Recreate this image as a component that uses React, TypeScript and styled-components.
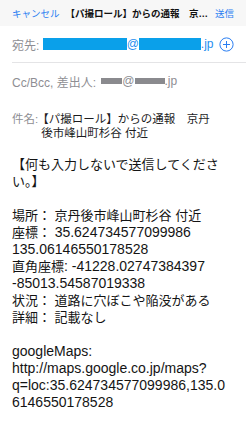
import React from 'react';
import styled, { createGlobalStyle } from 'styled-components';

const GlobalStyle = createGlobalStyle`
  html, body {
    margin: 0;
    padding: 0;
    background: #ffffff;
  }
  body {
    font-family: "Liberation Sans", "Noto Sans CJK JP", sans-serif;
    -webkit-font-smoothing: antialiased;
  }
`;

const Screen = styled.div`
  width: 246px;
  height: 425px;
  overflow: hidden;
  display: flex;
  flex-direction: column;
`;

const Header = styled.div`
  height: 26px;
  flex-shrink: 0;
  display: flex;
  align-items: center;
  gap: 6px;
  padding: 0 12px;
  background: #f7f7f7;
  font-size: 9.5px;
`;

const HeaderButton = styled.span`
  color: #2a7ef2;
  white-space: nowrap;
`;

const HeaderTitle = styled.span`
  flex: 1;
  min-width: 0;
  text-align: center;
  font-weight: 600;
  color: #111111;
  white-space: nowrap;
  overflow: hidden;
  text-overflow: ellipsis;
`;

const FieldRow = styled.div<{ $divider?: boolean }>`
  height: 36px;
  margin-left: 12px;
  padding-right: 12px;
  display: flex;
  align-items: center;
  font-size: 12px;
  white-space: nowrap;
  border-bottom: ${p => (p.$divider ? '1px solid #e4e4e6' : 'none')};
`;

const Label = styled.span`
  color: #8e8e93;
`;

const Address = styled.span<{ $color: string }>`
  display: inline-flex;
  align-items: center;
  color: ${p => p.$color};
`;

const Redact = styled.span<{ $w: number; $h: number; $color: string; $gap?: number }>`
  display: inline-block;
  width: ${p => p.$w}px;
  height: ${p => p.$h}px;
  margin-left: ${p => p.$gap || 0}px;
  background: ${p => p.$color};
`;

const AddButton = styled.span`
  margin-left: auto;
  display: flex;
  align-items: center;
`;

const SubjectRow = styled.div`
  margin-left: 12px;
  padding: 13px 33px 0 0;
  display: grid;
  grid-template-columns: auto 1fr;
  column-gap: 3px;
  font-size: 11.5px;
  line-height: 14px;
`;

const SubjectValue = styled.span`
  color: #1c1c1e;
  text-indent: -4px;
`;

const Body = styled.div`
  padding: 16px 12px 0 12px;
  font-size: 13px;
  line-height: 17px;
  color: #141414;
`;

const Line = styled.div`
  height: 17px;
  white-space: pre;
`;

const Latin = styled.span`
  font-family: "Liberation Sans", sans-serif;
  font-size: 14px;
  line-height: 1;
`;

const PlusCircle = () => (
  <svg width="15" height="15" viewBox="0 0 15 15" fill="none" stroke="#2a7ef2" strokeWidth="1">
    <circle cx="7.5" cy="7.5" r="6.6" />
    <path d="M7.5 4v7M4 7.5h7" />
  </svg>
);

const App = () => {
  return (
    <Screen>
      <GlobalStyle />
      <Header>
        <HeaderButton>キャンセル</HeaderButton>
        <HeaderTitle>【パ撮ロール】からの通報　京丹後市峰山町杉谷 付近</HeaderTitle>
        <HeaderButton>送信</HeaderButton>
      </Header>

      <FieldRow $divider>
        <Label>宛先:&nbsp;</Label>
        <Address $color="#1f8ff0">
          <Redact $w={84} $h={12} $color="#0aa0ea" />
          @
          <Redact $w={62} $h={12} $color="#0aa0ea" />
          .jp
        </Address>
        <AddButton>
          <PlusCircle />
        </AddButton>
      </FieldRow>

      <FieldRow>
        <Label>Cc/Bcc, 差出人:&nbsp;</Label>
        <Address $color="#8e8e93">
          <Redact $w={21} $h={6} $color="#8a8a8e" $gap={2} />
          @
          <Redact $w={30} $h={6} $color="#8a8a8e" />
          .jp
        </Address>
      </FieldRow>

      <SubjectRow>
        <Label>件名:</Label>
        <SubjectValue>【パ撮ロール】からの通報　京丹後市峰山町杉谷 付近</SubjectValue>
      </SubjectRow>

      <Body>
        <Line>【何も入力しないで送信してくださ</Line>
        <Line>い。】</Line>
        <Line />
        <Line>場所： 京丹後市峰山町杉谷 付近</Line>
        <Line>座標： <Latin>35.624734577099986</Latin></Line>
        <Line><Latin>135.06146550178528</Latin></Line>
        <Line>直角座標<Latin>: -41228.02747384397</Latin></Line>
        <Line><Latin>-85013.54587019338</Latin></Line>
        <Line>状況： 道路に穴ぼこや陥没がある</Line>
        <Line>詳細： 記載なし</Line>
        <Line />
        <Line><Latin>googleMaps:</Latin></Line>
        <Line><Latin>http://maps.google.co.jp/maps?</Latin></Line>
        <Line><Latin>q=loc:35.624734577099986,135.0</Latin></Line>
        <Line><Latin>6146550178528</Latin></Line>
      </Body>
    </Screen>
  );
};

export default App;
